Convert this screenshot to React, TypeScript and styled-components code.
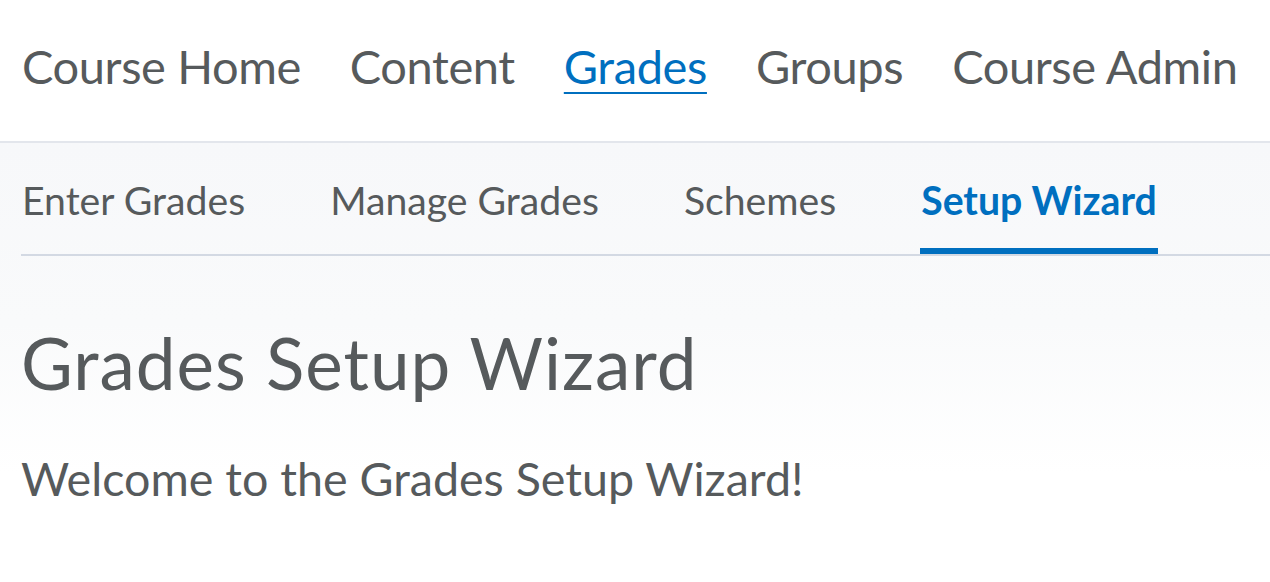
import React from "react";
import styled, { createGlobalStyle } from "styled-components";

const Global = createGlobalStyle`
  html, body { margin: 0; padding: 0; background: #fff; }
  body { font-family: Lato, "Noto Sans", sans-serif; color: #565a5c; }
`;

const Page = styled.div`
  width: 1270px;
  min-height: 582px;
  display: flex;
  flex-direction: column;
  overflow: hidden;
`;

const TopBar = styled.nav`
  height: 141px;
  display: flex;
  align-items: center;
  gap: 49px;
  padding: 0 22px;
  background: #fff;
  border-bottom: 2px solid #e3e6ec;
  box-sizing: content-box;
  white-space: nowrap;
`;

const TopLink = styled.a<{ $active?: boolean }>`
  font-size: 47px;
  letter-spacing: -0.4px;
  line-height: 1;
  color: ${(p) => (p.$active ? "#006fbf" : "#565a5c")};
  text-decoration: ${(p) => (p.$active ? "underline" : "none")};
  text-decoration-thickness: 2px;
  text-underline-offset: 8px;
  padding-bottom: 8px;
`;

const Body = styled.div`
  flex: 1;
  background: linear-gradient(to bottom, #f7f8fa 0px, #f9fafb 180px, #ffffff 330px);
  padding-left: 21px;
`;

const SubNav = styled.div`
  height: 111px;
  display: flex;
  align-items: stretch;
  gap: 83px;
  border-bottom: 2px solid #d3d9e3;
  white-space: nowrap;
`;

const Tab = styled.a<{ $active?: boolean }>`
  display: flex;
  align-items: center;
  padding: 8px 1px 0;
  font-size: 39.2px;
  font-weight: ${(p) => (p.$active ? 700 : 400)};
  color: ${(p) => (p.$active ? "#006fbf" : "#565a5c")};
  border-bottom: 6px solid ${(p) => (p.$active ? "#006fbf" : "transparent")};
`;

const Title = styled.h1`
  margin: 0;
  padding-top: 71px;
  font-size: 71px;
  letter-spacing: 1px;
  font-weight: 400;
  line-height: 1;
  color: #565a5c;
`;

const Welcome = styled.p`
  margin: 0;
  padding-top: 57px;
  font-size: 46.6px;
  line-height: 1;
  color: #565a5c;
`;

export default function App() {
  return (
    <Page>
      <Global />
      <TopBar>
        <TopLink>Course Home</TopLink>
        <TopLink>Content</TopLink>
        <TopLink $active>Grades</TopLink>
        <TopLink>Groups</TopLink>
        <TopLink>Course Admin</TopLink>
      </TopBar>
      <Body>
        <SubNav>
          <Tab>Enter Grades</Tab>
          <Tab>Manage Grades</Tab>
          <Tab>Schemes</Tab>
          <Tab $active>Setup Wizard</Tab>
        </SubNav>
        <Title>Grades Setup Wizard</Title>
        <Welcome>Welcome to the Grades Setup Wizard!</Welcome>
      </Body>
    </Page>
  );
}
